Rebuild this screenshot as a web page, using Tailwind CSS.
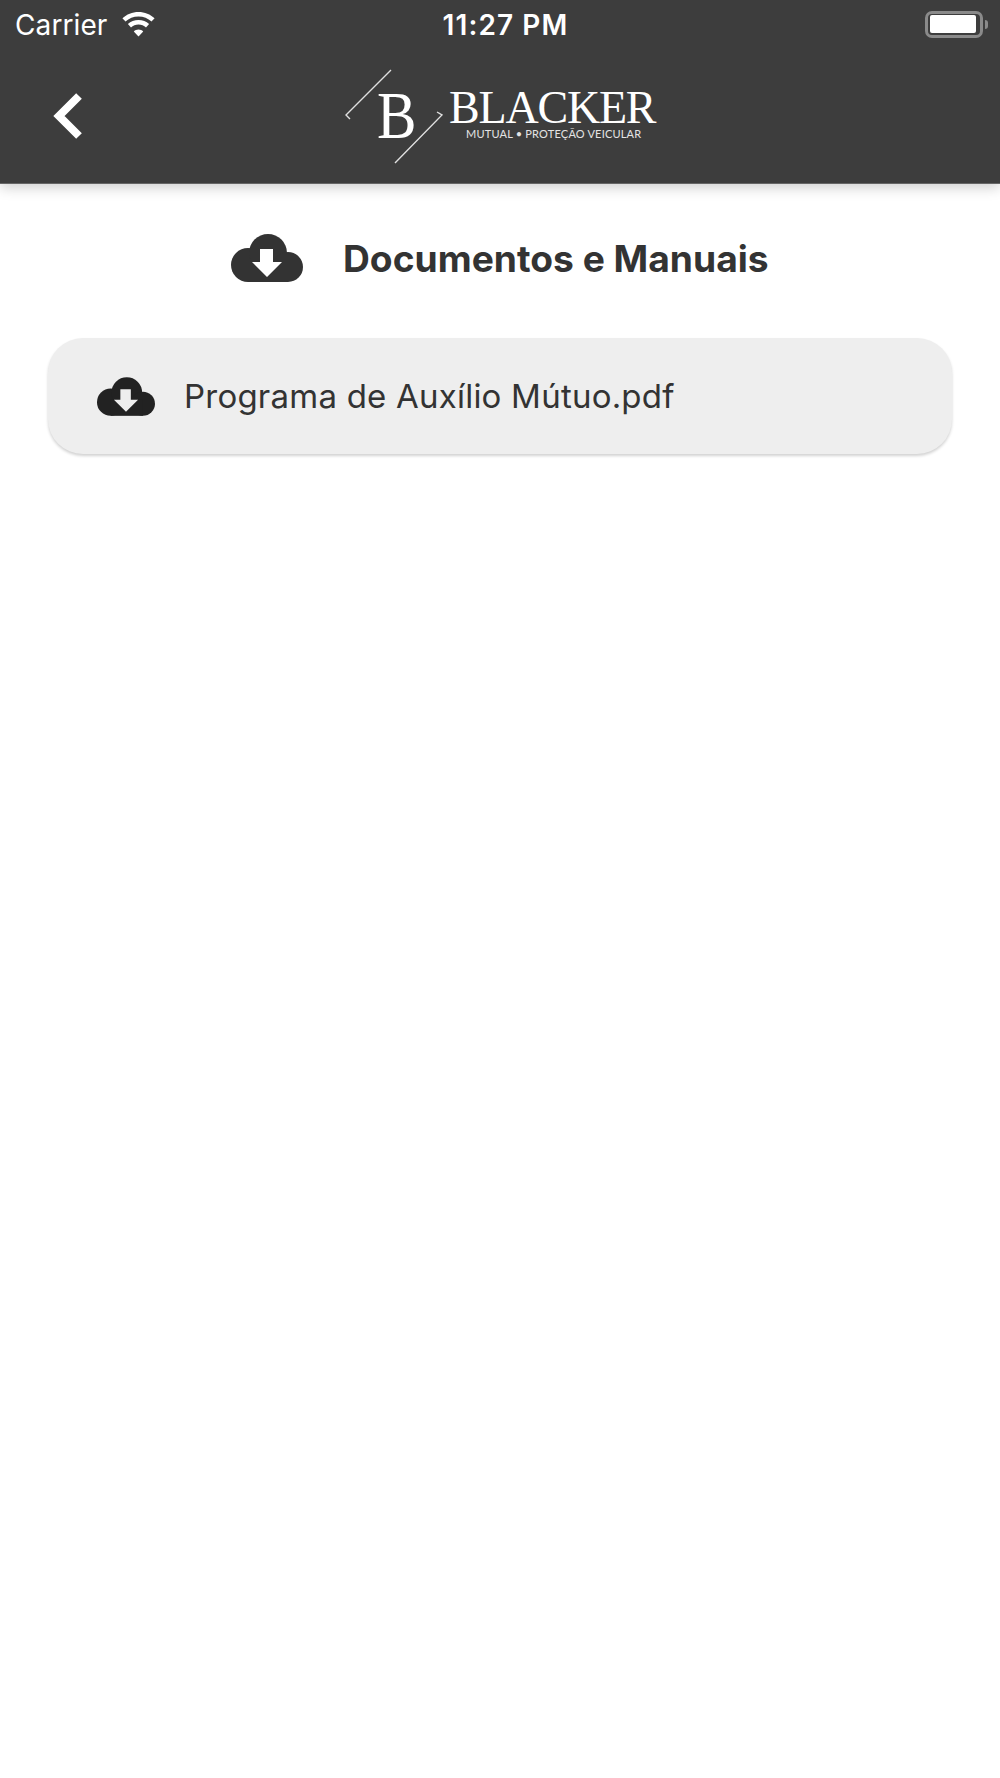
<!DOCTYPE html>
<html lang="pt">
<head>
<meta charset="utf-8">
<script src="https://cdn.jsdelivr.net/npm/@tailwindcss/browser@4"></script>
</head>
<body class="bg-white font-['Inter',sans-serif]">
<div class="w-[1000px] h-[1778px] overflow-hidden bg-white">
  <header class="relative h-[184px] bg-[#3d3d3d] border-b border-[#666] shadow-[0_4px_12px_rgba(0,0,0,0.18)]">
    <div class="relative h-[50px] text-white">
      <div class="absolute left-[15px] top-[7px] text-[28px] leading-[36px] tracking-[0.1px]">Carrier</div>
      <svg class="absolute left-[121px] top-[12px]" width="35" height="25" viewBox="0 0 35 25" fill="#fff">
        <path d="M17.5 4.5c5 0 9.600 1.900 13 5.100l3.100-3.300C29.400 2.400 23.700 0 17.500 0S5.600 2.400 1.400 6.300l3.100 3.300c3.400-3.200 8-5.100 13-5.100z"/>
        <path d="M17.500 12.500c2.900 0 5.500 1.100 7.500 2.900l3.100-3.300c-2.800-2.600-6.500-4.100-10.600-4.100s-7.800 1.500-10.600 4.100l3.100 3.300c2-1.800 4.600-2.900 7.500-2.900z"/>
        <path d="M17.500 24.500l4.700-5.100c-1.200-1.100-2.900-1.800-4.700-1.800s-3.500.7-4.700 1.800z"/>
      </svg>
      <div class="absolute left-0 right-0 top-[7px] pl-[11px] text-center text-[28px] leading-[36px] font-semibold tracking-[1.100px]">11:27 PM</div>
      <div class="absolute left-[925px] top-[11px] w-[58px] h-[27px] rounded-[7px] border-[3px] border-[#8a8a8a] pt-[1px] pl-[2px]">
        <div class="w-[46px] h-[18px] bg-white rounded-[2px]"></div>
      </div>
      <div class="absolute left-[985px] top-[20px] w-[3px] h-[9px] bg-[#8a8a8a] rounded-r-[3px]"></div>
    </div>
    <svg class="absolute left-[50px] top-[88px]" width="38" height="56" viewBox="0 0 38 56" fill="none">
      <path d="M29 8 L9 28 L29 48" stroke="#fff" stroke-width="8"/>
    </svg>
    <svg class="absolute left-[340px] top-[68px]" width="110" height="98" viewBox="0 0 110 98" fill="none" stroke="#e0e0e0" stroke-width="1.400">
      <path d="M51 2 L6 47 L10 51"/>
      <path d="M55 95 L102 47 L97 44"/>
    </svg>
    <div class="absolute left-[377px] top-[83px] font-['Liberation_Serif',serif] text-[68px] leading-[64px] text-white origin-left scale-x-[0.87]">B</div>
    <div class="absolute left-[449px] top-[88px] font-['Liberation_Serif',serif] text-[46px] leading-[40px] text-white tracking-[-1.200px] whitespace-nowrap">BLACKER</div>
    <div class="absolute left-[466px] top-[128px] font-['Lato',sans-serif] text-[11px] leading-[12px] text-[#e4e4e4] tracking-[0.200px] whitespace-nowrap">MUTUAL • PROTEÇÃO VEICULAR</div>
  </header>

  <main class="px-[48px]">
    <div class="flex items-center h-[148px] mb-[6px] pl-[183px]">
      <svg width="72" height="48" viewBox="0 0 72 48" class="shrink-0">
        <g fill="#333">
          <circle cx="17" cy="31" r="17"/>
          <circle cx="37" cy="19" r="19"/>
          <circle cx="57" cy="33" r="15"/>
          <rect x="17" y="28" width="40" height="20"/>
        </g>
        <path fill="#fff" d="M29 15h13v13h9L36 43 21 28h8z"/>
      </svg>
      <h1 class="ml-[40px] mt-[1px] text-[37.200px] leading-[44px] font-bold text-[#333] whitespace-nowrap">Documentos e Manuais</h1>
    </div>
    <div class="flex items-center h-[116px] bg-[#eeeeee] rounded-[35px] shadow-[0_2px_3px_rgba(0,0,0,0.18)] pl-[49px]">
      <svg width="58" height="39" viewBox="0 0 72 48" class="mt-[1px] shrink-0">
        <g fill="#222">
          <circle cx="17" cy="31" r="17"/>
          <circle cx="37" cy="19" r="19"/>
          <circle cx="57" cy="33" r="15"/>
          <rect x="17" y="28" width="40" height="20"/>
        </g>
        <path fill="#eee" d="M29 15h13v13h9L36 43 21 28h8z"/>
      </svg>
      <span class="ml-[29px] mb-[1px] text-[33px] leading-[40px] text-[#333] tracking-[0.220px] whitespace-nowrap">Programa de Auxílio Mútuo.pdf</span>
    </div>
  </main>
</div>
</body>
</html>
